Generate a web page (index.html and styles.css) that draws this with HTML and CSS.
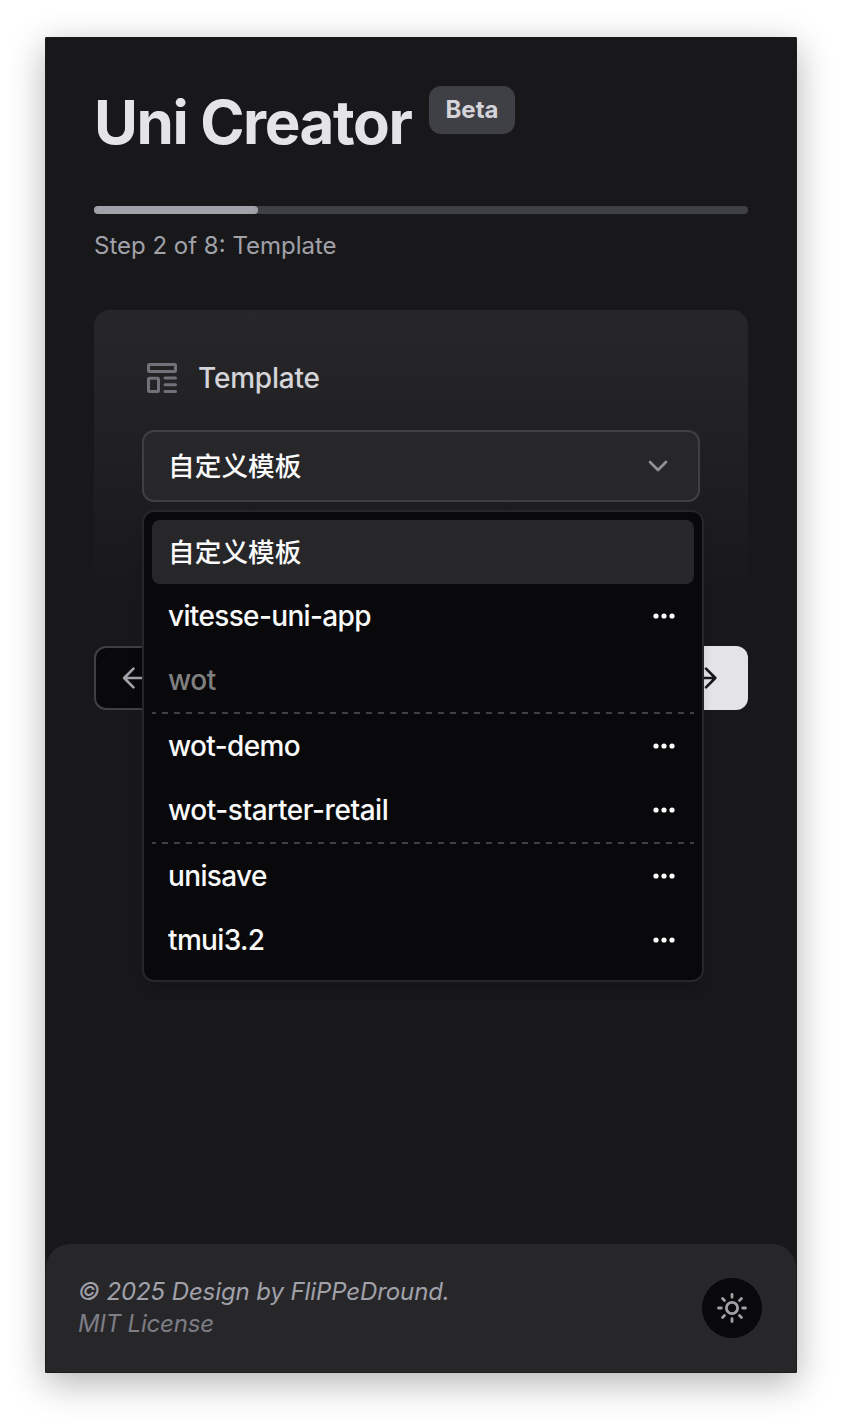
FILE: index.html
```html
<!DOCTYPE html>
<html lang="en">
<head>
<meta charset="utf-8">
<title>Uni Creator</title>
<link rel="stylesheet" href="styles.css">
</head>
<body>
<div class="window">
  <main class="content">
    <header class="header">
      <h1 class="title">Uni Creator</h1>
      <span class="badge">Beta</span>
    </header>
    <div class="progress"><div class="progress-fill" style="width:164px"></div></div>
    <p class="step">Step 2 of 8: Template</p>
    <section class="card">
      <div class="label">
        <svg class="label-icon" width="32" height="32" viewBox="0 0 32 32" fill="none" stroke="currentColor" stroke-width="3" stroke-linecap="round" stroke-linejoin="round">
          <rect x="2.5" y="2.5" width="27" height="7" rx="1"/>
          <rect x="2.5" y="16.2" width="10" height="13.3" rx="1"/>
          <path d="M19 16.1h10.5M19 22.7h10.5M19 29.4h10.5"/>
        </svg>
        <span class="label-text">Template</span>
      </div>
      <div class="select">
        <div class="trigger">
          <span class="cjk">自定义模板</span>
          <svg class="chevron" width="32" height="32" viewBox="0 0 24 24" fill="none" stroke="currentColor" stroke-width="2" stroke-linecap="round" stroke-linejoin="round"><path d="m6 9 6 6 6-6"/></svg>
        </div>
        <div class="menu">
          <div class="item selected"><span class="cjk">自定义模板</span></div>
          <div class="item"><span>vitesse-uni-app</span><svg class="dots" width="24" height="8" viewBox="0 0 24 8"><circle cx="4" cy="4" r="2.6"/><circle cx="12" cy="4" r="2.6"/><circle cx="20" cy="4" r="2.6"/></svg></div>
          <div class="item group">wot</div>
          <div class="divider"></div>
          <div class="item"><span>wot-demo</span><svg class="dots" width="24" height="8" viewBox="0 0 24 8"><circle cx="4" cy="4" r="2.6"/><circle cx="12" cy="4" r="2.6"/><circle cx="20" cy="4" r="2.6"/></svg></div>
          <div class="item long"><span>wot-starter-retail</span><svg class="dots" width="24" height="8" viewBox="0 0 24 8"><circle cx="4" cy="4" r="2.6"/><circle cx="12" cy="4" r="2.6"/><circle cx="20" cy="4" r="2.6"/></svg></div>
          <div class="divider"></div>
          <div class="item"><span>unisave</span><svg class="dots" width="24" height="8" viewBox="0 0 24 8"><circle cx="4" cy="4" r="2.6"/><circle cx="12" cy="4" r="2.6"/><circle cx="20" cy="4" r="2.6"/></svg></div>
          <div class="item"><span>tmui3.2</span><svg class="dots" width="24" height="8" viewBox="0 0 24 8"><circle cx="4" cy="4" r="2.6"/><circle cx="12" cy="4" r="2.6"/><circle cx="20" cy="4" r="2.6"/></svg></div>
        </div>
      </div>
    </section>
    <div class="actions">
      <div class="button back"><svg width="32" height="32" viewBox="0 0 24 24" fill="none" stroke="currentColor" stroke-width="2" stroke-linecap="round" stroke-linejoin="round"><path d="m11.6 19-7-7 7-7M19 12H5"/></svg></div>
      <div class="button next"><svg width="32" height="32" viewBox="0 0 24 24" fill="none" stroke="currentColor" stroke-width="2" stroke-linecap="round" stroke-linejoin="round"><path d="M5 12h14m-7-7 7 7-7 7"/></svg></div>
    </div>
  </main>
  <footer class="footer">
    <div class="credits">
      <div>© 2025 Design by FliPPeDround.</div>
      <div class="license">MIT License</div>
    </div>
    <div class="theme">
      <svg width="32" height="32" viewBox="0 0 32 32" fill="none" stroke="currentColor" stroke-width="2.8" stroke-linecap="round"><circle cx="16" cy="16" r="5.6"/><path d="M16 2.5v2.8M16 26.7v2.8M2.5 16h2.8M26.7 16h2.8M6.5 6.5l2 2M23.5 23.5l2 2M6.5 25.5l2-2M23.5 8.5l2-2"/></svg>
    </div>
  </footer>
</div>
</body>
</html>
```
FILE: styles.css
```css
* { box-sizing: border-box; }
body {
  margin: 0;
  height: 1426px;
  padding: 37px 45px 53px;
  background: #fff;
  font-family: Inter, "Noto Sans CJK SC", sans-serif;
  color: #fafafa;
  overflow: hidden;
}
svg { display: block; flex: none; }
.window {
  display: flex;
  flex-direction: column;
  justify-content: space-between;
  height: 1336px;
  border: 1px solid #1b1c1e;
  border-radius: 1px;
  background: #18181b;
  box-shadow: 0 10px 36px rgba(0, 0, 0, .3);
}
.content { padding: 48px 48px 0; }
.header { display: flex; align-items: flex-start; gap: 18px; height: 120px; }
.title {
  margin: 6px 0 0;
  font-size: 60px;
  line-height: 60px;
  font-weight: 700;
  letter-spacing: -1.4px;
  color: #e4e4e7;
  white-space: nowrap;
}
.badge {
  height: 48px;
  padding: 0 16px;
  border-radius: 12px;
  background: #3f3f46;
  color: #d4d4d8;
  font-size: 24px;
  line-height: 48px;
  font-weight: 700;
}
.progress { height: 8px; border-radius: 4px; background: #3f3f46; }
.progress-fill { height: 8px; border-radius: 4px; background: #a1a1aa; }
.step {
  margin: 16px 0 0;
  font-size: 24px;
  line-height: 32px;
  color: #a1a1aa;
  white-space: nowrap;
}
.card {
  height: 288px;
  margin-top: 48px;
  padding: 48px;
  border-radius: 16px;
  background: linear-gradient(#27272a, #18181b);
}
.label { display: flex; align-items: center; gap: 20px; height: 40px; padding-left: 4px; }
.label-icon { color: #71717a; }
.label-text { font-size: 28px; font-weight: 500; letter-spacing: -.2px; color: #d4d4d8; }
.select { position: relative; margin-top: 32px; }
.trigger {
  display: flex;
  align-items: center;
  justify-content: space-between;
  height: 72px;
  padding: 0 24px;
  border: 2px solid #3f3f46;
  border-radius: 12px;
  background: #27272a;
}
.chevron { color: #929294; }
.cjk {
  padding-bottom: 2px;
  font-family: "Noto Sans CJK SC", sans-serif;
  font-size: 26.6px;
  font-weight: 500;
  letter-spacing: .1px;
  line-height: 40px;
}
.menu {
  position: absolute;
  top: 80px;
  left: 0;
  z-index: 2;
  width: 562px;
  padding: 8px;
  border: 2px solid #27272a;
  border-radius: 12px;
  background: #09090b;
  box-shadow: 0 8px 12px -2px rgba(0, 0, 0, .15);
}
.item {
  display: flex;
  align-items: center;
  justify-content: space-between;
  height: 64px;
  padding: 0 18px 0 16px;
  border-radius: 8px;
  font-size: 28px;
  font-weight: 450;
  letter-spacing: -.65px;
  white-space: nowrap;
}
.long { letter-spacing: -.45px; }
.selected { background: #27272a; }
.group { color: #808081; font-weight: 500; letter-spacing: -.4px; }
.dots { fill: #fafafa; }
.divider {
  height: 2px;
  background: repeating-linear-gradient(90deg, #3f3f46 0 6px, transparent 6px 12px) -2px 0 / 546px 2px;
}
.actions { display: flex; justify-content: space-between; margin-top: 48px; }
.button { display: flex; align-items: center; width: 160px; height: 64px; padding: 0 24px; border-radius: 12px; }
.back { background: #09090b; border: 2px solid #3f3f46; padding-left: 22px; color: #a1a1aa; }
.next { justify-content: flex-end; background: #e4e4e7; padding-right: 26px; color: #18181b; }
.footer {
  display: flex;
  justify-content: space-between;
  align-items: center;
  height: 128px;
  padding: 0 34px 0 32px;
  border-radius: 24px 24px 0 0;
  background: #27272a;
}
.credits {
  font-size: 24px;
  line-height: 32px;
  font-style: italic;
  letter-spacing: -.1px;
  color: #a1a1aa;
  white-space: nowrap;
}
.license { color: #7d7d85; letter-spacing: -.2px; }
.theme {
  display: flex;
  align-items: center;
  justify-content: center;
  width: 60px;
  height: 60px;
  border-radius: 50%;
  background: #09090b;
  color: #a1a1aa;
}
```
